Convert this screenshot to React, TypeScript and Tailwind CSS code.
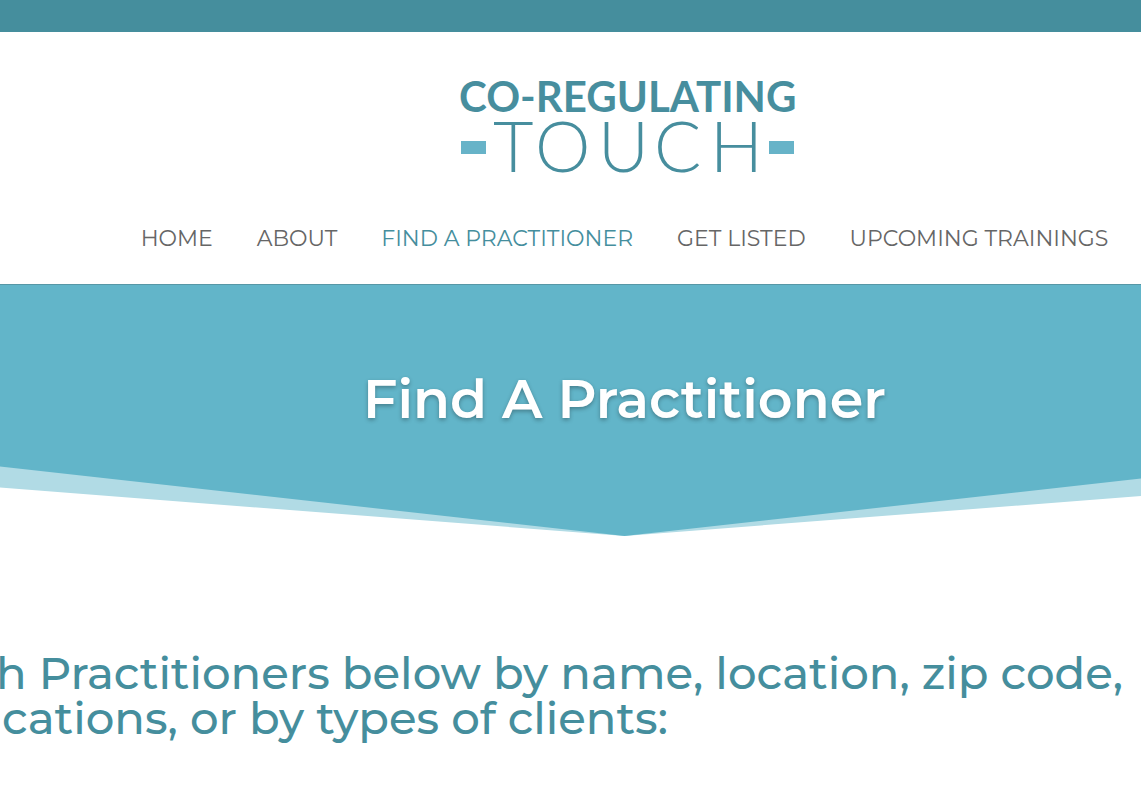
const navItems = [
  { label: 'HOME', href: '#home' },
  { label: 'ABOUT', href: '#about' },
  { label: 'FIND A PRACTITIONER', href: '#find', active: true },
  { label: 'GET LISTED', href: '#get-listed' },
  { label: 'UPCOMING TRAININGS', href: '#trainings' }
];

function Logo() {
  return (
    <a href="#home" aria-label="Co-Regulating Touch" className="block">
      <svg width="342" height="100" viewBox="0 0 342 100" fill="#478e9e" className="font-['Lato',sans-serif]">
        <text x="2" y="36" fontSize="42" fontWeight="700">
          CO-REGULATING
        </text>
        {/* wide-set lettering */}
        <text x="36 78 141 197 253" y="96" fontSize="70" fontWeight="300">
          TOUCH
        </text>
        <rect x="4" y="65" width="25" height="13" fill="#67b3c8" />
        <rect x="312" y="65" width="25" height="13" fill="#67b3c8" />
      </svg>
    </a>
  );
}

function Header() {
  return (
    <header className="border-b border-[#5797a6] bg-white">
      <div className="h-8 bg-[#458e9d]" />
      <div className="flex flex-col items-center pt-11 pl-[114px]">
        <Logo />
      </div>
      <nav className="flex justify-center gap-11 pt-[47px] pb-[29px] pl-[108px]">
        {navItems.map((item) => (
          <a
            key={item.label}
            href={item.href}
            className={`text-[22px] leading-[32px] whitespace-nowrap ${item.active ? 'text-[#458e9d]' : 'text-[#666666]'}`}
          >
            {item.label}
          </a>
        ))}
      </nav>
    </header>
  );
}

function Hero() {
  return (
    <section>
      <div className="bg-[#62b5c9] pt-20 pb-[33px] pl-[108px]">
        <h1 className="text-center text-[54px] leading-[68px] font-semibold text-white [text-shadow:0_2px_4px_rgba(0,0,0,0.3)]">
          Find A Practitioner
        </h1>
      </div>
      {/* arrow divider */}
      <svg viewBox="0 0 1141 70" preserveAspectRatio="none" className="block h-[70px] w-full" aria-hidden="true">
        <path d="M0 0H1141V30L624.5 70L0 21.5Z" fill="#b1dbe5" />
        <path d="M0 0H1141V12.5L624.5 70L0 0.5Z" fill="#62b5c9" />
      </svg>
    </section>
  );
}

export default function App() {
  return (
    <div className="overflow-hidden bg-white font-['Montserrat',sans-serif]">
      <Header />
      <Hero />
      <main className="pt-[114px] pb-12">
        <h2 className="-ml-1 text-[45px] leading-[45px] font-medium whitespace-nowrap text-[#458e9d]">
          h Practitioners below by name, location, zip code,
          <span className="block pl-1.5">cations, or by types of clients:</span>
        </h2>
      </main>
    </div>
  );
}
